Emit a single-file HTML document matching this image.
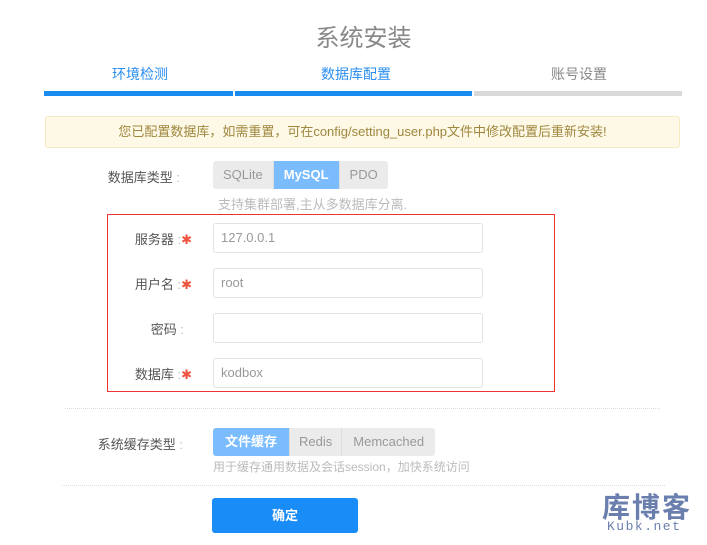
<!DOCTYPE html>
<html><head><meta charset="utf-8"><style>
*{margin:0;padding:0;box-sizing:border-box}
body{width:707px;height:545px;background:#fff;position:relative;overflow:hidden;font-family:"Liberation Sans","Noto Sans CJK SC",sans-serif;font-size:13px;color:#555}
.a{position:absolute;white-space:nowrap}
.inp{position:absolute;left:213px;width:270px;height:30px;border:1px solid #e3e3e3;border-radius:3px;color:#999;font-size:13px;line-height:28px;padding-left:7px}
.lab{position:absolute;width:80px;text-align:right;font-size:13px;color:#555}
.lab i{font-style:normal;color:#bbb}
.lab b{font-weight:normal;color:#f0533d}
.seg{position:absolute;display:flex;height:28px;border-radius:3px;overflow:hidden;background:#ebebeb}
.seg span{line-height:28px;padding:0 10px;color:#999;font-size:13px;border-left:1px solid #ddd}
.seg span:first-child{border-left:none}
.seg .on{background:#7bbcff;color:#fff;font-weight:bold}
</style></head><body>
<div class="a" style="left:0;width:727px;top:18px;text-align:center;font-size:24px;color:#888">系统安装</div>
<div class="a" style="left:112px;top:64px;font-size:14px;color:#2b8ef0">环境检测</div>
<div class="a" style="left:321px;top:64px;font-size:14px;color:#2b8ef0">数据库配置</div>
<div class="a" style="left:551px;top:64px;font-size:14px;color:#888">账号设置</div>
<div class="a" style="left:44px;top:91px;width:189px;height:5px;background:#1a8cf0"></div>
<div class="a" style="left:235px;top:91px;width:237px;height:5px;background:#1a8cf0"></div>
<div class="a" style="left:474px;top:91px;width:208px;height:5px;background:#d9d9d9"></div>
<div class="a" style="left:45px;top:116px;width:635px;height:32px;background:#fdf9e6;border:1px solid #f5ebbf;border-radius:3px;text-align:center;line-height:30px;color:#a0873f;font-size:13px">您已配置数据库，如需重置，可在config/setting_user.php文件中修改配置后重新安装!</div>
<div class="lab" style="left:100px;top:167px">数据库类型<i> :</i></div>
<div class="seg" style="left:213px;top:161px"><span>SQLite</span><span class="on">MySQL</span><span>PDO</span></div>
<div class="a" style="left:218px;top:194px;color:#bbb;font-size:13px">支持集群部署,主从多数据库分离.</div>
<div class="a" style="left:107px;top:214px;width:448px;height:178px;border:1px solid #ee3333"></div>
<div class="lab" style="left:112px;top:229px">服务器<i> :</i><b>✱</b></div>
<div class="inp" style="top:223px">127.0.0.1</div>
<div class="lab" style="left:112px;top:274px">用户名<i> :</i><b>✱</b></div>
<div class="inp" style="top:268px">root</div>
<div class="lab" style="left:112px;top:319px;width:72px">密码<i> :</i></div>
<div class="inp" style="top:313px"></div>
<div class="lab" style="left:112px;top:364px">数据库<i> :</i><b>✱</b></div>
<div class="inp" style="top:358px">kodbox</div>
<div class="a" style="left:65px;top:408px;width:595px;border-top:1px dotted #ddd"></div>
<div class="lab" style="left:78px;top:434px;width:105px">系统缓存类型<i> :</i></div>
<div class="seg" style="left:213px;top:428px"><span class="on" style="padding:0 12px">文件缓存</span><span style="padding:0 9px">Redis</span><span style="padding:0 11px">Memcached</span></div>
<div class="a" style="left:213px;top:458px;color:#bbb;font-size:12px">用于缓存通用数据及会话session，加快系统访问</div>
<div class="a" style="left:62px;top:485px;width:603px;border-top:1px dotted #ddd"></div>
<div class="a" style="left:212px;top:498px;width:146px;height:35px;background:#1a8cf8;border-radius:3px;color:#fff;text-align:center;line-height:35px;font-size:13px;font-weight:bold">确定</div>
<div class="a" style="left:602px;top:486px;font-size:28px;font-weight:bold;color:#6b7fae;letter-spacing:2px">库博客</div>
<div class="a" style="left:607px;top:519px;font-size:13px;color:#6b7fae;letter-spacing:1.5px;font-family:'Liberation Mono',monospace">Kubk.net</div>
</body></html>
